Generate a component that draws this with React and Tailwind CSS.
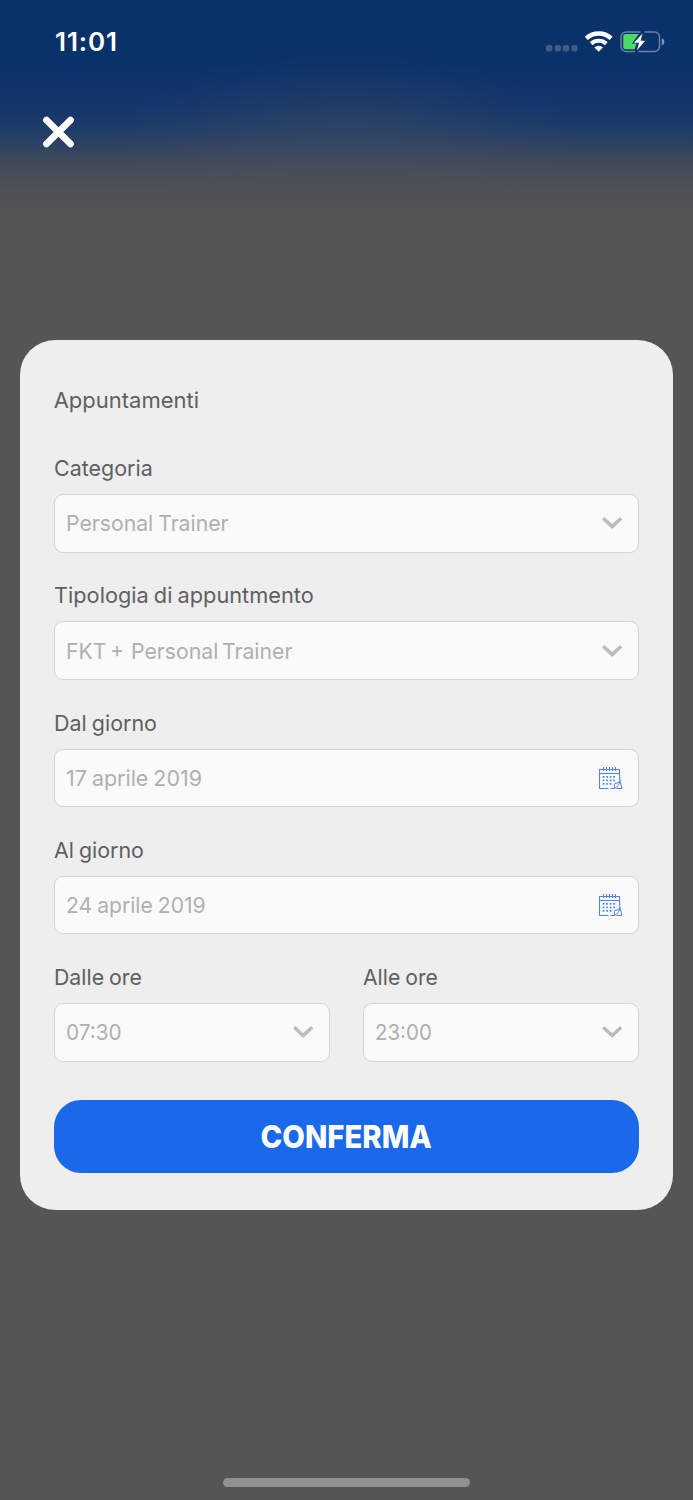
import React from "react";

function Chevron() {
  return (
    <svg className="h-[14px] w-[22px] shrink-0" viewBox="0 0 22 14" fill="none">
      <path d="M2.2 2.2 L11.2 10.6 L20.2 2.2" stroke="#bcbcbc" strokeWidth="3.5" />
    </svg>
  );
}

function CalendarIcon() {
  return (
    <svg className="h-[24px] w-[25px] shrink-0" viewBox="0 0 25 24" fill="none" stroke="#4f84ec">
      <path d="M1.5 22.5V3.5H21.5V8L22 15M1.5 22.5H10.5M12.5 22.5H16.2" strokeWidth="1.1" />
      <path d="M1.5 7.5H21.5" strokeWidth="1" />
      <path d="M5.5 1V5M8.5 1V5M11.5 1V5M14.5 1V5M17.5 1V5" strokeWidth="1.1" />
      <path d="M4.7 10.9H17.3M4.7 14.4H17.3M4.7 17.9H13.7" strokeWidth="1.7" strokeDasharray="1.7 1.8" />
      <path d="M16.4 22.5V18.5Q16.4 17.3 18 17.3Q21 17.3 22 14.5Q21.5 20 16.4 22.5ZM22.2 15.5L24 22.5H18.5" strokeWidth="1" />
    </svg>
  );
}

function Field({ label, value, icon, labelClass, valueClass }) {
  return (
    <div className="flex min-w-0 flex-1 flex-col gap-[11px]">
      <div className="h-[30px] text-[22px] leading-[30px] whitespace-pre text-[#606060]">
        <span className={`inline-block origin-left ${labelClass}`}>{label}</span>
      </div>
      <div className="flex h-[58.5px] items-center justify-between rounded-[9px] border border-[#d4d4d4] bg-[#fafafa] pr-[15px] pl-[11.3px] text-[22px] leading-[30px] whitespace-pre text-[#b0b0b0]">
        <span className={`inline-block origin-left ${valueClass}`}>{value}</span>
        {icon === "calendar" ? <CalendarIcon /> : <Chevron />}
      </div>
    </div>
  );
}

function StatusIcons() {
  return (
    <svg className="h-[26px] w-[122px]" viewBox="544 29 122 26" fill="none">
      <g fill="#405b88">
        <rect x="546" y="45" width="6.3" height="6.6" rx="2" />
        <rect x="554.6" y="45" width="6.3" height="6.6" rx="2" />
        <rect x="562.9" y="45" width="6.3" height="6.6" rx="2" />
        <rect x="571.3" y="45" width="6.3" height="6.6" rx="2" />
      </g>
      <g stroke="#fff">
        <path d="M586.3 38.3a18.3 18.3 0 0 1 24.8 0" strokeWidth="4.4" />
        <path d="M591.1 43.6a11.5 11.5 0 0 1 15.2 0" strokeWidth="4.2" />
      </g>
      <path d="M594.4 47.4a6.3 6.3 0 0 1 8.6 0L598.7 51.8Z" fill="#fff" />
      <path
        d="M635 51.5H626a5 5 0 0 1-5-5V37a5 5 0 0 1 5-5H640.5M644.5 32H654.5a5 5 0 0 1 5 5V46.5a5 5 0 0 1-5 5H638.5"
        stroke="#6a82a6"
        strokeWidth="1.5"
      />
      <path d="M661.8 38.3a3.8 3.8 0 0 1 0 7.2Z" fill="#8496b3" />
      <path d="M625.5 34H638.8L632 43.5H636.5L634.8 49.3H625.5a2.3 2.3 0 0 1-2.3-2.3V36.3a2.3 2.3 0 0 1 2.3-2.3Z" fill="#4cd964" />
      <path d="M642.5 33.6L634 42.7H639L637 50.3L645.2 40.7H640.6Z" fill="#fff" />
    </svg>
  );
}

export default function App() {
  return (
    <div className="flex h-[1500px] w-[693px] flex-col overflow-hidden bg-[#555555] bg-[radial-gradient(ellipse_230px_80px_at_346px_134px,rgba(74,84,90,0.32),rgba(74,84,90,0.2)_45%,rgba(74,84,90,0.06)_80%,transparent),linear-gradient(to_bottom,#09326a_0px,#0a326a_65px,#10336b_88px,#14366b_108px,#1e3c69_128px,#2f4263_146px,#404a5a_162px,#4b4f57_180px,#525353_205px,#555555_235px)] font-['Inter',sans-serif]">
      <header className="flex h-[84px] shrink-0 items-start justify-between pt-[29px] pr-[27px] pl-[55px]">
        <div className="text-[26px] leading-[26px] font-semibold tracking-[0.9px] text-white">11:01</div>
        <StatusIcons />
      </header>
      <div className="flex h-[256px] shrink-0 items-start pt-[31px] pl-[41px]">
        <button aria-label="Chiudi" className="flex">
          <svg className="h-[34px] w-[35px]" viewBox="0 0 35 34" fill="none">
            <path d="M5.5 5.1L29.5 28.9M29.5 5.1L5.5 28.9" stroke="#fff" strokeWidth="6.8" strokeLinecap="round" />
          </svg>
        </button>
      </div>

      <main className="ml-[20px] flex h-[870.3px] w-[652.5px] shrink-0 flex-col rounded-[35px] bg-[#eeeeee] pt-[45px] pr-[33.5px] pl-[33.7px]">
        <h1 className="h-[30px] text-[22px] leading-[30px] font-normal text-[#606060]">Appuntamenti</h1>
        <div className="mt-[38.1px] flex flex-col gap-[27.75px]">
          <Field label="Categoria" value="Personal Trainer" labelClass="scale-x-[0.975]" valueClass="scale-x-[0.963] [word-spacing:-1px]" />
          <Field label="Tipologia di appuntmento" value="FKT +  Personal Trainer" labelClass="scale-x-[0.988] [word-spacing:-1px]" valueClass="scale-x-[0.966] [word-spacing:-2.6px]" />
          <Field label="Dal giorno" value="17 aprile 2019" icon="calendar" labelClass="scale-x-[0.975] [word-spacing:-1px]" valueClass="scale-x-[0.974] [word-spacing:-1px]" />
          <Field label="Al giorno" value="24 aprile 2019" icon="calendar" labelClass="scale-x-[0.972] [word-spacing:-1px]" valueClass="scale-x-[0.96] [word-spacing:-1px]" />
          <div className="flex gap-[33.5px]">
            <Field label="Dalle ore" value="07:30" labelClass="scale-x-[0.968] [word-spacing:-1px]" valueClass="scale-x-[0.945]" />
            <Field label="Alle ore" value="23:00" labelClass="scale-x-[0.963] [word-spacing:-1px]" valueClass="scale-x-[0.93]" />
          </div>
        </div>
        <button className="mt-[38.6px] h-[73px] shrink-0 rounded-[27px] bg-[#1a69ea] text-[31.5px] leading-[74px] font-extrabold text-white">
          <span className="inline-block scale-x-[0.93]">CONFERMA</span>
        </button>
      </main>

      <div className="flex flex-1 items-end justify-center pb-[13.5px]">
        <div className="h-[8.5px] w-[247px] rounded-full bg-[#919191]" />
      </div>
    </div>
  );
}
